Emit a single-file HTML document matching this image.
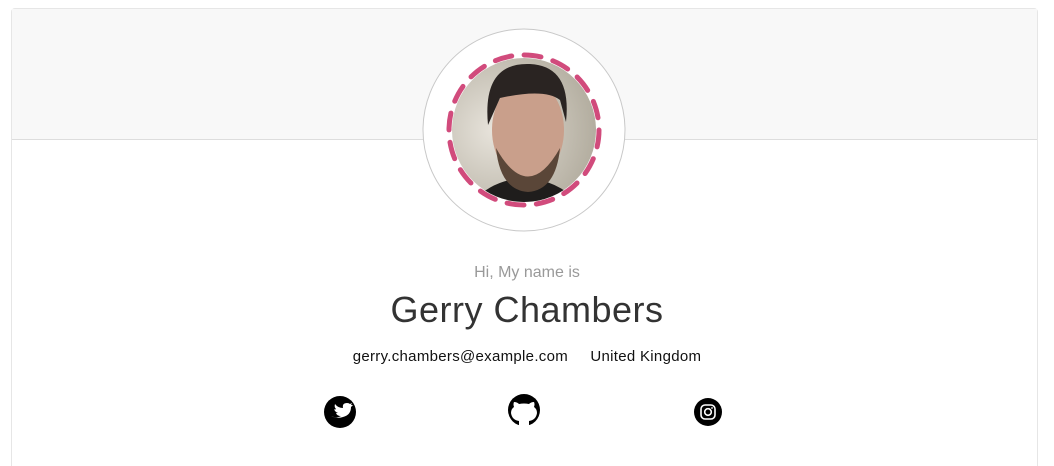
<!DOCTYPE html>
<html style="overflow:hidden"><head><style>
html,body{margin:0;background:#fff;width:1054px;height:466px;overflow:hidden;font-family:"Liberation Sans",sans-serif}
.card{position:absolute;left:11px;top:8px;width:1025px;height:470px;border:1px solid #e6e6e6;border-radius:4px;background:#fff}
.wrap{position:absolute;left:0;top:0;width:1054px;height:466px;overflow:hidden}
.hdr{position:absolute;left:0;top:0;width:100%;height:130px;background:#f8f8f8;border-bottom:1px solid #ddd}
.t{position:absolute;left:0;width:1054px;text-align:center}
</style></head><body><div class="wrap">
<div class="card"><div class="hdr"></div></div>
<svg style="position:absolute;left:0;top:0" width="1054" height="466">
<defs><clipPath id="c"><circle cx="524" cy="130" r="72"/></clipPath>
<radialGradient id="bg" cx="0.3" cy="0.5" r="0.8"><stop offset="0" stop-color="#e8e4dc"/><stop offset="1" stop-color="#a9a394"/></radialGradient></defs>
<circle cx="524" cy="130" r="101" fill="#fff" stroke="#c8c8c8" stroke-width="1"/>
<g clip-path="url(#c)">
<rect x="450" y="55" width="150" height="150" fill="url(#bg)"/>
<path d="M470 205 Q490 180 524 178 Q560 180 580 205Z" fill="#1f1d1c"/>
<ellipse cx="528" cy="130" rx="36" ry="50" fill="#c99f8b"/>
<path d="M488 125 Q482 62 530 64 Q572 66 566 122 L560 100 Q545 88 500 98Z" fill="#2a2422"/>
<path d="M496 148 Q528 205 560 148 Q556 190 528 192 Q500 190 496 148Z" fill="#5a4638"/>
</g>
<circle cx="524" cy="130" r="75" fill="none" stroke="#d14b7c" stroke-width="5" stroke-dasharray="17 12.45" stroke-linecap="round"/>
<circle cx="340" cy="412" r="16" fill="#000"/>
<path d="M331 416 q5 3 10 0 q-4 0 -5 -3 h2 q-3 -1 -4 -4 q1 1 2 0 q-2 -2 -1 -5 q3 4 8 4 q-1 -5 4 -5 q2 0 3 1 l2 -1 l-1 2 l2 0 l-2 2 q0 8 -8 10 q-6 2 -12 -1z" fill="#fff"/>
<circle cx="524" cy="410" r="16" fill="#000"/>
<path d="M519 427 v-6 q-7 -1 -8 -8 q0 -4 3 -6 q-1 -3 0 -5 q3 0 5 2 q5 -1 10 0 q2 -2 5 -2 q1 2 0 5 q3 2 3 6 q-1 7 -8 8 v6z" fill="#fff"/>
<circle cx="708" cy="412" r="14" fill="#000"/>
<rect x="701" y="405" width="14" height="14" rx="4" fill="none" stroke="#fff" stroke-width="1.6"/>
<circle cx="708" cy="412" r="3.3" fill="none" stroke="#fff" stroke-width="1.6"/>
<circle cx="712" cy="408" r="0.9" fill="#fff"/>
</svg>
<div class="t" style="top:264px;font-size:16px;color:#999">Hi, My name is</div>
<div class="t" style="top:289px;font-size:36px;color:#333;letter-spacing:0.5px">Gerry Chambers</div>
<div class="t" style="top:348px;font-size:15px;color:#111;letter-spacing:0.3px">gerry.chambers@example.com &nbsp;&nbsp;&nbsp; United Kingdom</div>
</div></body></html>
